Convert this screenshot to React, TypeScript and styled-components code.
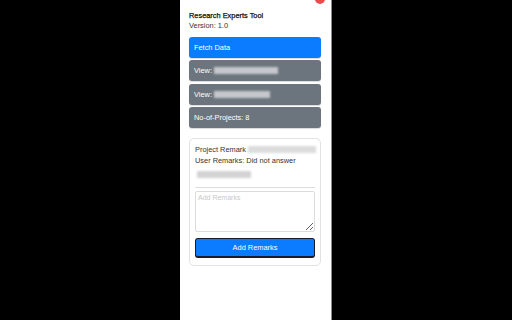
import React from "react";
import styled, { createGlobalStyle } from "styled-components";

const Global = createGlobalStyle`
  html, body { margin: 0; padding: 0; background: #000; }
  body { font-family: "Liberation Sans", Arial, sans-serif; }
`;

const Screen = styled.div`
  width: 512px;
  height: 320px;
  background: #000;
  display: flex;
  justify-content: flex-start;
  overflow: hidden;
`;

const Panel = styled.div`
  position: relative;
  margin-left: 180px;
  width: 152px;
  height: 320px;
  background: #fff;
  border-right: 1px solid #8a8a8a;
  padding: 11px 10px 0 9px;
  box-sizing: border-box;
  display: flex;
  flex-direction: column;
  color: #222;
`;

const CloseDot = styled.div`
  position: absolute;
  top: -6px;
  right: 6px;
  width: 10px;
  height: 10px;
  border-radius: 50%;
  background: #ec4b4b;
`;

const Title = styled.div`
  font-size: 7.4px;
  line-height: 10px;
  font-weight: normal;
  color: #111;
  -webkit-text-stroke: 0.25px #111;
`;

const Version = styled.div`
  font-size: 7.4px;
  line-height: 10px;
  color: #333;
`;

const ButtonStack = styled.div`
  margin-top: 6px;
  display: flex;
  flex-direction: column;
  gap: 2.3px;
`;

const Bar = styled.div<{ $variant: "primary" | "secondary" }>`
  height: 21px;
  border-radius: 3px;
  display: flex;
  align-items: center;
  padding: 0 5px;
  font-size: 7.4px;
  color: #fff;
  background: ${(p) => (p.$variant === "primary" ? "#0b7cff" : "#6c757d")};
  box-shadow: 0 1px 1px rgba(0, 0, 0, 0.15);
`;

const Blur = styled.span<{ $w: number; $tone?: string }>`
  display: inline-block;
  width: ${(p) => p.$w}px;
  height: 7px;
  margin-left: 2px;
  background: ${(p) => p.$tone ?? "rgba(220,220,225,0.8)"};
  filter: blur(1.3px);
  vertical-align: middle;
`;

const Card = styled.div`
  margin-top: 10px;
  border: 1px solid #e2e2e2;
  border-radius: 5px;
  padding: 5px 5px 7px 5px;
  display: flex;
  flex-direction: column;
`;

const Line = styled.div`
  font-size: 7.4px;
  line-height: 11px;
  color: #333;
  white-space: nowrap;
`;

const BlurLine = styled.div`
  margin-top: 4px;
  height: 10px;
  display: flex;
  align-items: center;
`;

const Rule = styled.hr`
  margin: 7px 0 3px 0;
  border: 0;
  border-top: 1px solid #ddd;
`;

const Remarks = styled.textarea`
  height: 41px;
  box-sizing: border-box;
  border: 1px solid #dcdcdc;
  border-radius: 2px;
  resize: vertical;
  font-family: "Liberation Sans", Arial, sans-serif;
  font-size: 7px;
  padding: 2px 2px;
  color: #333;
  &::placeholder { color: #c8c8c8; }
`;

const AddButton = styled.button`
  margin-top: 6px;
  height: 20px;
  border: 1px solid #1a1a2a;
  border-bottom-width: 2px;
  border-radius: 3px;
  background: #0b7cff;
  color: #fff;
  font-family: "Liberation Sans", Arial, sans-serif;
  font-size: 7.4px;
  padding: 0;
`;

export default function App() {
  return (
    <>
      <Global />
      <Screen>
        <Panel>
          <CloseDot />
          <Title>Research Experts Tool</Title>
          <Version>Version: 1.0</Version>
          <ButtonStack>
            <Bar $variant="primary">Fetch Data</Bar>
            <Bar $variant="secondary">View:<Blur $w={64} /></Bar>
            <Bar $variant="secondary">View:<Blur $w={56} /></Bar>
            <Bar $variant="secondary">No-of-Projects: 8</Bar>
          </ButtonStack>
          <Card>
            <Line>Project Remark<Blur $w={68} $tone="rgba(205,205,205,0.7)" /></Line>
            <Line>User Remarks: Did not answer</Line>
            <BlurLine><Blur $w={54} $tone="rgba(200,200,200,0.8)" /></BlurLine>
            <Rule />
            <Remarks placeholder="Add Remarks" />
            <AddButton>Add Remarks</AddButton>
          </Card>
        </Panel>
      </Screen>
    </>
  );
}
